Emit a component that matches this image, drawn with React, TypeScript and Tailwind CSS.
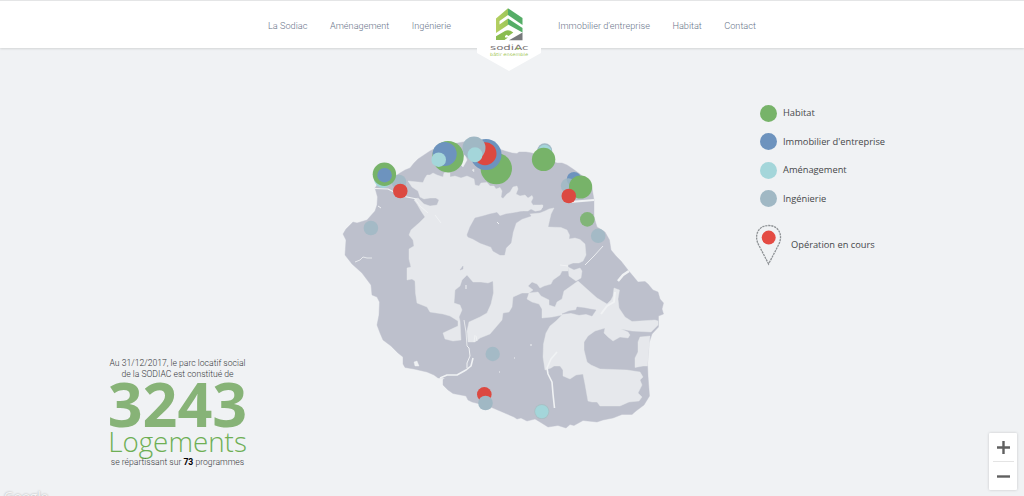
import React from "react";

type Dot = { x: number; y: number; r: number; c: string; o?: number };

const GREEN = "#77b369";
const BLUE = "#6d93be";
const AQUA = "#a4d6da";
const GREY = "#a0b8c4";
const RED = "#dc4941";

const dots: Dot[] = [
  { x: 383, y: 179, r: 9, c: AQUA },
  { x: 399, y: 182, r: 7.3, c: GREY, o: 0.85 },
  { x: 384.4, y: 174.3, r: 11.7, c: GREEN },
  { x: 384.6, y: 175.2, r: 7.3, c: BLUE },
  { x: 400.3, y: 191, r: 7.3, c: RED },
  { x: 370.9, y: 228, r: 7.3, c: GREY, o: 0.85 },
  { x: 448, y: 156.7, r: 15.7, c: GREEN },
  { x: 444.7, y: 154, r: 12, c: BLUE },
  { x: 438.7, y: 159.7, r: 7.3, c: AQUA },
  { x: 496.3, y: 168.6, r: 15.7, c: GREEN },
  { x: 486, y: 154.6, r: 15.5, c: BLUE },
  { x: 485, y: 153.7, r: 11.5, c: RED },
  { x: 474, y: 148, r: 11.5, c: GREY },
  { x: 475, y: 154.7, r: 7.5, c: AQUA },
  { x: 544.7, y: 150.7, r: 7.5, c: GREY },
  { x: 544.7, y: 151.5, r: 6.8, c: AQUA },
  { x: 543.6, y: 159.4, r: 11.7, c: GREEN },
  { x: 574, y: 179.2, r: 7.3, c: BLUE },
  { x: 568.3, y: 185.7, r: 7.5, c: GREY, o: 0.85 },
  { x: 580.6, y: 187, r: 11.6, c: GREEN },
  { x: 568.8, y: 196, r: 7.3, c: RED },
  { x: 587.3, y: 219.4, r: 7.3, c: GREEN, o: 0.85 },
  { x: 598.2, y: 235.8, r: 7.3, c: GREY, o: 0.85 },
  { x: 492.7, y: 354, r: 7.2, c: GREY, o: 0.85 },
  { x: 484.3, y: 394.4, r: 7.3, c: RED },
  { x: 485.5, y: 403, r: 7.3, c: GREY },
  { x: 541.8, y: 411.6, r: 7.5, c: "#a9bfc4" },
  { x: 541.8, y: 411.6, r: 6.7, c: AQUA },
];

const COAST =
  "M375 188L377 185L386 180L397 175L400 173L405 170L410 168L414 163L418 159L424 155L430 151L438 147L447 145L463 142L475 141L490 146L505 151L512 153L517 153.5L519 152L526 152L532 153L545 158L557 163L562 163L567 165L573 169L580 174L587 180L592 188L594 200L594 217L597 227L605 232L609.5 240L611 250L616 256L621 261L628 270L633 276L638 282L645 281.5L648 284L653 290L658 292L660 299L663.5 303L662 309L663.5 314L658.5 316L658.5 327L652 334L649 343L647.5 363L648 376L649.5 396L644 405L636 411L632 414.5L622 414.5L613 418L603 420L597 422L583 420.5L574 425.5L570 424.5L566 428L558 425.5L548 427L540 422L535 419L527 421L521 418L517 419L514 417L493 408L485 405L478 403.5L472 402L468 400L466 396L453 393.5L448 390L443 385L443 379.5L445 378L438 378L434 375L427 372L414 369L405 367.5L403 364L403 357L398 353L391 346L383 340L380 333L377 325L379 315L379.5 302L377 297L372 295L371 285L365 277L362 273L352 264L345 255L346 240L343 234L346 229L353 222L357 223L367 220L375 211L377 205L377.5 197Z";

const NORTH =
  "M408 181L423 182.5L425 178L427 175L430 175L433 173L437 175L443 177L444 173L447 172L450 173L450 177L455 176L461 178L467 176L474 179L475 185L479 186L481 183L487 182.5L490 186L494 186L496 189L500 187.5L502 191L501 197L503 198.5L507 194L510 192L513 187L517 186L518 189L516 194L520 196L525 195L528 198L532 195.5L533 198L531 202L533 205L537 206L542 205L543 207L540 210L535 211L531 209L528 211L523 211L519 213L530 214L540 213L545 211L549 209L554 208L551 214L548 227L561 227.5L567 230L569.5 235L569 239L575 238L580 239.5L585 244L586 255L583 261L579 263L573 263L568 265L568 271L562 271L560 275L553 280L551 284L544 286L540 288L537 284L532 282L528 286L533 290L529 293L522 293L513 297L512 307L509 312L503 313L502 320L496 327L490 334L480 338L475 342L468 342L467 331L469 322L480 317L487 313L491 304L493.5 293L493 281L488 283L481 282L473 282L467 275L462 280L460 286L455 290L454 303L460 305L462 310L459 317L460 321L461 340L453 341L445 339L443 333L458 326L458 321L450 316L443 314L430 312L427 307L422 305L417 303L415.5 293L415 281L412 279L407 280L407 268L411 267L409 259L409 249L414 246L413 240L409 235L411 230L419 223L425 217L421 211L417 204L414 200L418 198L424 204L430 206L437 205L439 200L436 198L430 198L424 199L420 197L418 191L412 187Z";

const CIRQUE =
  "M467 235L470 227L475 218L483 216L490 214L497 212.5L500 216L506 214L513 213L521 211.5L529 213L531 216L522 219L516 223L513 232L511 243L506 248L504.5 255L500 255L493 251L491 247L480 243L473 239L468 237Z";

const EAST =
  "M578 281L571 286L564 291L562 299L557 302L555 307L549 305L549 300L541 296L538 292L529 293L527 299L532 302L539 304L542 309L542 318L552 317L562 315L556 321L550 326L546 333L543.5 344L543 357L545 370L551 368L554 366L560 366L563 370L563 376L570 379L576 375L583 374L585 384L588 401L592 402L597 402L600 406L620 406L629 402L639 401L642 397L638 393L640 389L642 385L640 380L643 377L640 372L627 370L613 369.5L600 369L591 365L587 362L584 350L584 342L588 336L595 331L605 328L604 333L608 337L613 341L620 337L628 338L630 335L628 332L621 329L632 331L651 332L658 325L658 321L655 320L632 321.5L625 317L619 308L618 299L619.5 290L614 288L613 296L611 300L607 304L602 301L597 298L588 290Z";

const zones: [string, string][] = [
  [COAST, "#bdc0cc"],
  [NORTH, "#e6e8ec"],
  [CIRQUE, "#bdc0cc"],
  [EAST, "#e6e8ec"],
  ["M562 314L569 311L576 310L577 307L585 308L590 309L596 310L592 316L586 314L579 315L571 313Z", "#bdc0cc"],
  ["M568 267L574 270L580 268L582 271L581 278L576 281L569 276Z", "#e6e8ec"],
  ["M640 337L650 336L647.5 366L643 366L635 367.5L635 358L638 352L638 342Z", "#e6e8ec"],
  ["M414 362L417 361L419 366L415 366Z", "#f0f2f4"],
  ["M462 158L465 155L467 160L463 167L461 165Z", "#f0f2f4"],
  ["M472 170l2 -1l0 3z", "#e6e8ec"],
  ["M460 270L463 266L463 269Z", "#bdc0cc"],
  ["M534 205L543 205L541 210L535 211Z", "#e6e8ec"],
];

const streams: [string, number][] = [
  ["M375 188.5L388 189L394 192L402 196L417 199", 1.2],
  ["M415 199L420 206L428 213M435 215L441 223", 1],
  ["M570 202L582 201L594 200", 2],
  ["M355 262L360 260L363 257L367 258L372 258", 0.8],
  ["M378 206L381 208", 1],
  ["M440 378L447 375L457 375L466 370L471 366L473 358", 1.6],
  ["M467 368L467 363L470 356L469 348L467 346", 1],
  ["M464 320L466 332L467 346", 0.8],
  ["M629 271L623 275L618 281", 2.5],
  ["M603 246L594 256L585 265M560 265L568 266", 0.9],
  ["M615 292L614 302L607 306L601 314", 2],
  ["M557 352L551 359L547 368L548 374L552 382L553 394L554.5 408", 1.6],
  ["M474 342L475 335M477 341L476 336", 1],
  ["M530 345h2M514 358h1M499 372h1M497 222l2 2M466 285v4", 1],
];

const Header = () => (
  <header className="relative z-10 flex h-[48px] justify-center border-t border-[#e4e5e6] bg-white font-['Roboto',sans-serif] text-[9.2px] font-light leading-[50px] text-[#69748a] shadow-[0_1px_2px_rgba(0,0,0,0.12)]">
    <nav className="flex w-[209px] shrink-0 justify-between whitespace-nowrap pr-[26px]">
      <a>La Sodiac</a>
      <a>Aménagement</a>
      <a>Ingénierie</a>
    </nav>
    <Logo />
    <nav className="flex w-[215px] shrink-0 justify-between whitespace-nowrap pl-[17px]">
      <a>Immobilier d’entreprise</a>
      <a>Habitat</a>
      <a>Contact</a>
    </nav>
  </header>
);

const Logo = () => (
  <svg viewBox="477 1 64 71" className="h-[71px] w-16 shrink-0">
    <defs>
      <linearGradient id="lime">
        <stop stopColor="#b5cf61" />
        <stop offset="1" stopColor="#9cc65a" />
      </linearGradient>
    </defs>
    <path d="M477 1H541V53L509 71L477 53Z" fill="#fff" />
    <path d="M496 18.5L508 8.3V15L499.5 21V24.5L508 18.5V25L496 33Z" fill="url(#lime)" />
    <path d="M508 8.3L522.5 18V25L508 15Z" fill="#55ad67" />
    <path d="M508 18.5L522.5 28V32.5L508 24.5Z" fill="#55ad67" />
    <path d="M496 40V36.3L505 31Q508.5 28.8 513.3 32.5L508.5 36L506.5 34.8L505 36V37.5H508L504.5 40Z" fill="#8bbd51" />
    <path d="M522.5 32.5V40.3H509Z" fill="#77797c" />
    <text x="490" y="50" textLength="38.5" lengthAdjust="spacingAndGlyphs" fontFamily="DejaVu Sans" fontSize="7.3" fontWeight="400" fill="#777173">sodiAc</text>
    <path d="M516.3 49.5L517.8 47L519.3 49.5Z" fill="#91bd45" />
    <text x="490" y="55.5" textLength="38" lengthAdjust="spacingAndGlyphs" fontFamily="DejaVu Sans" fontSize="4.4" fontWeight="400" fill="#a4c760">bâtir ensemble</text>
  </svg>
);

const IslandMap = () => (
  <svg viewBox="0 48 1024 448" className="absolute inset-0 h-full w-full">
    {zones.map(([d, fill], i) => (
      <path key={i} d={d} fill={fill} stroke={fill} strokeWidth="0.4" strokeLinejoin="round" />
    ))}
    {streams.map(([d, w], i) => (
      <path key={i} d={d} fill="none" stroke="#f0f2f4" strokeWidth={w} strokeLinejoin="round" />
    ))}
    {dots.map((p, i) => (
      <circle key={i} cx={p.x} cy={p.y} r={p.r} fill={p.c} opacity={p.o ?? 1} />
    ))}
  </svg>
);

const LegendRow = ({ swatch, label }: { swatch: string; label: string }) => (
  <li className="flex h-[28.5px] items-center gap-[6px]">
    <span className={`size-[17px] rounded-full ${swatch}`} />
    <span>{label}</span>
  </li>
);

const Legend = () => (
  <aside className="absolute left-[755px] top-[51px] whitespace-nowrap font-['Open_Sans',sans-serif] text-[9.3px] text-[#45474a]">
    <ul className="pl-[5px]">
      <LegendRow swatch="bg-[#77b369]" label="Habitat" />
      <LegendRow swatch="bg-[#6d93be]" label="Immobilier d'entreprise" />
      <LegendRow swatch="bg-[#a4d6da]" label="Aménagement" />
      <LegendRow swatch="bg-[#a0b8c4]" label="Ingénierie" />
    </ul>
    <div className="mt-[11px] flex items-center gap-[9px]">
      <svg viewBox="0 0 27 42" className="h-[42px] w-[27px]">
        <path d="M13.6 40L4.5 22.5C-2 12 3 1.5 13.6 1.5S29 12 22.7 22.5Z" fill="none" stroke="#8d9194" strokeWidth="1.3" strokeDasharray="2.2 0.8" />
        <circle cx="13.7" cy="13.6" r="7" fill="#e44b43" />
      </svg>
      <span>Opération en cours</span>
    </div>
  </aside>
);

const Stats = () => (
  <section className="absolute left-[97px] top-[310px] flex w-[161px] flex-col items-center whitespace-nowrap font-['Roboto',sans-serif] text-[8.65px] font-light leading-[11px] text-[#36383b]">
    <p>Au 31/12/2017, le parc locatif social</p>
    <p>de la SODIAC est constitué de</p>
    <p className="font-['Open_Sans',sans-serif] text-[61px] font-bold leading-[48px] text-[#87b377]">3243</p>
    <p className="font-['Open_Sans',sans-serif] text-[27.8px] font-light leading-[26px] text-[#6eaf54]">Logements</p>
    <p className="pt-[3px]">
      se répartissant sur <b className="font-bold text-black">73</b> programmes
    </p>
  </section>
);

const ZoomControl = () => (
  <div className="absolute bottom-[6px] right-[7px] flex h-[57px] w-[28px] flex-col items-center rounded-[1px] bg-white shadow-[0_0_3px_rgba(0,0,0,0.18)]">
    <button aria-label="Zoom avant" className="flex flex-1 items-center">
      <svg viewBox="0 0 13 13" className="size-[13px]">
        <path d="M0 6.5H13M6.5 0V13" stroke="#606060" strokeWidth="2.4" />
      </svg>
    </button>
    <span className="h-px w-[21px] bg-[#e4e4e4]" />
    <button aria-label="Zoom arrière" className="flex flex-1 items-center">
      <svg viewBox="0 0 13 13" className="size-[13px]">
        <path d="M0 6.5H13" stroke="#606060" strokeWidth="2.4" />
      </svg>
    </button>
  </div>
);

export default function App() {
  return (
    <div className="flex h-[496px] w-[1024px] flex-col overflow-hidden bg-[#f0f2f4]">
      <Header />
      <main className="relative flex-1 overflow-hidden">
        <IslandMap />
        <Legend />
        <Stats />
        <ZoomControl />
        <span className="absolute left-[4px] top-[440px] font-['Open_Sans',sans-serif] text-[13.5px] leading-[16px] text-[#f6f7f8] [text-shadow:0_0_2px_#999]">Google</span>
      </main>
    </div>
  );
}
